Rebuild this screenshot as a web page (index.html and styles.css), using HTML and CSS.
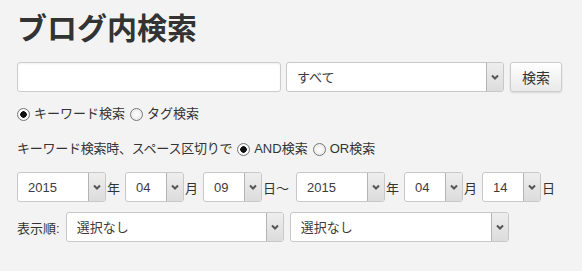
FILE: index.html
```html
<!DOCTYPE html>
<html lang="ja">
<head>
  <meta charset="UTF-8">
  <meta name="viewport" content="width=device-width, initial-scale=1.0">
  <title>ブログ内検索</title>
  <link rel="stylesheet" href="styles.css">
</head>
<body>
  <h1 class="title">ブログ内検索</h1>

  <form class="search">
    <!-- keyword + category -->
    <div class="row fields">
      <input type="text" class="keyword">
      <label class="select w218">
        <select><option>すべて</option></select>
        <span class="arrow"><svg width="8" height="6" viewBox="0 0 8 6"><path d="M1 1.5 L4 4.5 L7 1.5" fill="none" stroke="#555" stroke-width="2"/></svg></span>
      </label>
      <button type="button" class="btn">検索</button>
    </div>

    <div class="row line">
      <label class="radio"><input type="radio" name="mode" checked>キーワード検索</label>
      <label class="radio"><input type="radio" name="mode">タグ検索</label>
    </div>

    <div class="row line second">
      <span class="hint">キーワード検索時、スペース区切りで</span>
      <label class="radio"><input type="radio" name="op" checked>AND検索</label>
      <label class="radio"><input type="radio" name="op">OR検索</label>
    </div>

    <!-- date range -->
    <div class="row dates">
      <label class="select w89">
        <select><option>2015</option></select>
        <span class="arrow"><svg width="8" height="6" viewBox="0 0 8 6"><path d="M1 1.5 L4 4.5 L7 1.5" fill="none" stroke="#555" stroke-width="2"/></svg></span>
      </label>
      <span class="unit">年</span>
      <label class="select w59">
        <select><option>04</option></select>
        <span class="arrow"><svg width="8" height="6" viewBox="0 0 8 6"><path d="M1 1.5 L4 4.5 L7 1.5" fill="none" stroke="#555" stroke-width="2"/></svg></span>
      </label>
      <span class="unit">月</span>
      <label class="select w59">
        <select><option>09</option></select>
        <span class="arrow"><svg width="8" height="6" viewBox="0 0 8 6"><path d="M1 1.5 L4 4.5 L7 1.5" fill="none" stroke="#555" stroke-width="2"/></svg></span>
      </label>
      <span class="unit range">日〜</span>
      <label class="select w89">
        <select><option>2015</option></select>
        <span class="arrow"><svg width="8" height="6" viewBox="0 0 8 6"><path d="M1 1.5 L4 4.5 L7 1.5" fill="none" stroke="#555" stroke-width="2"/></svg></span>
      </label>
      <span class="unit">年</span>
      <label class="select w59">
        <select><option>04</option></select>
        <span class="arrow"><svg width="8" height="6" viewBox="0 0 8 6"><path d="M1 1.5 L4 4.5 L7 1.5" fill="none" stroke="#555" stroke-width="2"/></svg></span>
      </label>
      <span class="unit">月</span>
      <label class="select w59">
        <select><option>14</option></select>
        <span class="arrow"><svg width="8" height="6" viewBox="0 0 8 6"><path d="M1 1.5 L4 4.5 L7 1.5" fill="none" stroke="#555" stroke-width="2"/></svg></span>
      </label>
      <span class="unit">日</span>
    </div>

    <!-- sort order -->
    <div class="row sort">
      <span class="label">表示順:</span>
      <label class="select w218">
        <select><option>選択なし</option></select>
        <span class="arrow"><svg width="8" height="6" viewBox="0 0 8 6"><path d="M1 1.5 L4 4.5 L7 1.5" fill="none" stroke="#555" stroke-width="2"/></svg></span>
      </label>
      <label class="select w219">
        <select><option>選択なし</option></select>
        <span class="arrow"><svg width="8" height="6" viewBox="0 0 8 6"><path d="M1 1.5 L4 4.5 L7 1.5" fill="none" stroke="#555" stroke-width="2"/></svg></span>
      </label>
    </div>
  </form>
</body>
</html>
```

FILE: styles.css
```css
body {
  margin: 0;
  padding: 0 17px;
  background: #f3f3f3;
  color: #333;
  font-family: "Liberation Sans", "Noto Sans CJK JP", sans-serif;
  font-size: 13px;
}
.title {
  margin: 11px 0 15px 0;
  font-size: 30px;
  line-height: 36px;
  font-weight: bold;
  color: #333;
}
.row {
  display: flex;
  align-items: center;
}
.fields {
  height: 30px;
}
.keyword {
  box-sizing: border-box;
  width: 264px;
  height: 30px;
  margin: 0 5px 0 0;
  border: 1px solid #ccc;
  border-radius: 3px;
  background: #fff;
  box-shadow: inset 0 1px 2px rgba(0, 0, 0, 0.06);
}
.select {
  position: relative;
  display: block;
  box-sizing: border-box;
  height: 30px;
}
.select select {
  appearance: none;
  -webkit-appearance: none;
  box-sizing: border-box;
  width: 100%;
  height: 100%;
  margin: 0;
  padding: 0 20px 0 10px;
  border: 1px solid #c8c8c8;
  border-radius: 3px;
  background: #fff;
  color: #3c3c3c;
  font-family: "Liberation Sans", "Noto Sans CJK JP", sans-serif;
  font-size: 13px;
}
.arrow {
  position: absolute;
  top: 1px;
  right: 1px;
  bottom: 1px;
  width: 16px;
  display: flex;
  align-items: center;
  justify-content: center;
  border-left: 1px solid #b4b4b4;
  border-radius: 0 2px 2px 0;
  background: linear-gradient(#eee, #dcdcdc);
  pointer-events: none;
}
.w218 { width: 218px; }
.w219 { width: 219px; }
.w89 { width: 89px; }
.w59 { width: 59px; }
.btn {
  box-sizing: border-box;
  width: 52px;
  height: 30px;
  margin-left: 6px;
  border: 1px solid #ccc;
  border-radius: 3px;
  background: linear-gradient(#fff, #e9e9e9);
  box-shadow: 0 1px 2px rgba(0, 0, 0, 0.12);
  color: #333;
  font-family: "Noto Sans CJK JP", sans-serif;
  font-size: 14px;
  cursor: pointer;
}
.line {
  height: 20px;
  margin-top: 10px;
}
.line.second {
  margin-top: 15px;
}
.hint {
  letter-spacing: -0.25px;
}
.radio {
  display: flex;
  align-items: center;
}
.radio input {
  appearance: none;
  -webkit-appearance: none;
  box-sizing: border-box;
  width: 13px;
  height: 13px;
  margin: 4px 4px 0 0;
  border: 1px solid #777;
  border-radius: 50%;
  background: radial-gradient(#fff, #e4e4e4);
}
.radio + .radio input {
  margin-left: 5px;
}
.second .radio input {
  margin-left: 5px;
}
.radio input:checked {
  background: radial-gradient(circle, #111 0 3px, #fff 3.5px, #e8e8e8);
}
.dates {
  height: 30px;
  margin-top: 15px;
}
.unit {
  margin: 0 5px 0 1px;
}
.unit.range {
  margin-right: 7px;
}
.sort {
  height: 30px;
  margin-top: 10px;
}
.sort .label {
  margin-right: 6px;
}
.sort .select + .select {
  margin-left: 6px;
}
```
